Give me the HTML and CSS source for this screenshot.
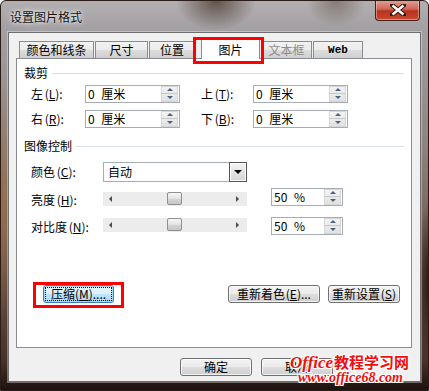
FILE: index.html
```html
<!DOCTYPE html>
<html lang="zh-CN">
  <head>
    <meta charset="UTF-8" />
    <title>设置图片格式</title>
    <link rel="stylesheet" href="styles.css">
  </head>
  <body>
    <div class="window">
      <div class="titlebar">
        <span class="title">设置图片格式</span>
        <span class="close-btn">
          <svg width="16" height="12" viewBox="0 0 16 12">
            <path d="M2 1 L14 11 M14 1 L2 11" stroke="#3a1510" stroke-width="4.4" stroke-linecap="square" />
            <path d="M2.5 1.5 L13.5 10.5 M13.5 1.5 L2.5 10.5" stroke="#fff" stroke-width="2.4" />
          </svg>
        </span>
      </div>

      <div class="client">
        <div class="tabs">
          <div class="tab t1">颜色和线条</div>
          <div class="tab t2">尺寸</div>
          <div class="tab t3">位置</div>
          <div class="tab active t4">图片</div>
          <div class="tab disabled t5">文本框</div>
          <div class="tab web t6">Web</div>
        </div>

        <div class="panel">
          <div class="group-title">
            <span>裁剪</span><i class="rule"></i>
          </div>
          <div class="crop-grid">
            <label>左 (<u>L</u>):</label>
            <div class="spin"><span class="val">0 厘米</span><span class="spin-btns"><b class="up"></b><b class="down"></b></span></div>
            <span></span>
            <label>上 (<u>T</u>):</label>
            <div class="spin"><span class="val">0 厘米</span><span class="spin-btns"><b class="up"></b><b class="down"></b></span></div>

            <label>右 (<u>R</u>):</label>
            <div class="spin"><span class="val">0 厘米</span><span class="spin-btns"><b class="up"></b><b class="down"></b></span></div>
            <span></span>
            <label>下 (<u>B</u>):</label>
            <div class="spin"><span class="val">0 厘米</span><span class="spin-btns"><b class="up"></b><b class="down"></b></span></div>
          </div>

          <div class="group-title g2">
            <span>图像控制</span><i class="rule"></i>
          </div>
          <div class="ctrl-row color-row">
            <label>颜色 (<u>C</u>):</label>
            <div class="select"><span class="val">自动</span><span class="drop"><b></b></span></div>
          </div>
          <div class="ctrl-row bright-row">
            <label>亮度 (<u>H</u>):</label>
            <div class="slider"><i class="arr-l"></i><i class="thumb" style="left: 64px"></i><i class="arr-r"></i></div>
            <div class="spin pct"><span class="val">50 %</span><span class="spin-btns"><b class="up"></b><b class="down"></b></span></div>
          </div>
          <div class="ctrl-row contrast-row">
            <label>对比度 (<u>N</u>):</label>
            <div class="slider"><i class="arr-l"></i><i class="thumb" style="left: 64px"></i><i class="arr-r"></i></div>
            <div class="spin pct"><span class="val">50 %</span><span class="spin-btns"><b class="up"></b><b class="down"></b></span></div>
          </div>

          <div class="btn-row">
            <button class="btn focused"><span>压缩(<u>M</u>)....</span></button>
            <div class="right-btns">
              <button class="btn recolor">重新着色 (<u>E</u>)...</button>
              <button class="btn reset">重新设置 (<u>S</u>)</button>
            </div>
          </div>
        </div>

        <div class="footer">
          <button class="btn">确定</button>
          <button class="btn">取消</button>
        </div>
      </div>

      <!-- 标注框 -->
      <div class="mark mark-tab"></div>
      <div class="mark mark-btn"></div>

      <!-- 水印 -->
      <div class="watermark">
        <div class="wm-top"><span class="wm-en">Office</span>教程学习网</div>
        <div class="wm-url">www.office68.com</div>
      </div>
    </div>
  </body>
</html>
```

FILE: styles.css
```css
body {
  margin: 0;
  font-family: "Noto Sans CJK SC", "Liberation Sans", sans-serif;
  font-size: 12px;
  color: #000;
}
u {
  text-decoration: underline;
}

.window {
  position: relative;
  width: 429px;
  height: 391px;
  box-sizing: border-box;
  padding: 0 7px 8px 7px;
  display: flex;
  flex-direction: column;
  overflow: hidden;
  background:
    radial-gradient(ellipse 40px 30px at 215px 0, rgba(70, 50, 40, 0.75), transparent),
    radial-gradient(ellipse 30px 26px at 335px 0, rgba(90, 70, 60, 0.5), transparent),
    radial-gradient(ellipse 14px 120px at 0 200px, rgba(160, 110, 70, 0.8), transparent),
    radial-gradient(ellipse 14px 80px at 429px 280px, rgba(30, 15, 10, 0.9), transparent),
    linear-gradient(to bottom, #b3afb1 0, #a3a0a3 28px, #8f8582 140px, #6f5548 260px, #4a3128 360px, #1a100c 391px);
  border: 1px solid #2a1c16;
  border-radius: 6px 6px 0 0;
}

/* 标题栏 */
.titlebar {
  height: 31px;
  display: flex;
  align-items: center;
  padding-left: 2px;
}
.title {
  font-size: 12px;
  color: #111;
  text-shadow: 0 0 6px #fff, 0 0 3px rgba(255, 255, 255, 0.8);
  margin-top: -1px;
}
.close-btn {
  margin-left: auto;
  margin-right: 1px;
  align-self: flex-start;
  width: 45px;
  height: 21px;
  box-sizing: border-box;
  margin-top: -1px;
  border: 1px solid #4a1e18;
  border-top: none;
  border-radius: 0 0 4px 4px;
  background: linear-gradient(to bottom, #e3a497 0, #d0685a 45%, #b8321f 55%, #c84a30 100%);
  box-shadow: inset 0 0 0 1px rgba(255, 220, 210, 0.45);
  display: flex;
  align-items: center;
  justify-content: center;
}

/* 客户区 */
.client {
  flex: 1;
  background-color: #f0f0f0;
  border: 1px solid #6e6e6e;
  box-shadow: 0 0 0 1px rgba(255, 255, 255, 0.35);
  display: flex;
  flex-direction: column;
}

/* 选项卡 */
.tabs {
  display: flex;
  align-items: flex-end;
  height: 20px;
  margin-top: 5px;
  padding-left: 10px;
}
.tab {
  height: 17px;
  box-sizing: border-box;
  border: 1px solid #898c95;
  border-bottom: none;
  background: linear-gradient(to bottom, #f2f2f2 0, #ebebeb 50%, #dddddd 51%, #cfcfcf 100%);
  display: flex;
  align-items: center;
  justify-content: center;
  line-height: 14px;
  margin-left: 1px;
}
.t1 { width: 75px; margin-left: 0; }
.t2 { width: 53px; }
.t3 { width: 46px; }
.t4 { width: 59px; margin-left: 6px; }
.t5 { width: 51px; }
.t6 { width: 50px; }
.tab.active {
  height: 21px;
  margin-bottom: -1px;
  background: #fff;
  position: relative;
  z-index: 1;
  padding-top: 1px;
}
.tab.disabled {
  color: #8d8d8d;
}
.tab.web {
  font-family: "Liberation Mono", monospace;
  font-size: 11px;
  font-weight: bold;
}

/* 面板 */
.panel {
  margin: 0 8px 0 7px;
  height: 290px;
  box-sizing: border-box;
  border: 1px solid #898c95;
  background: #fff;
  display: flex;
  flex-direction: column;
}
.group-title {
  display: flex;
  align-items: center;
  padding: 7px 7px 0 7px;
  line-height: 14px;
}
.group-title .rule {
  flex: 1;
  height: 1px;
  background: #d5dfe5;
  margin-left: 4px;
  margin-top: 1px;
}
.group-title.g2 {
  padding-top: 11px;
}

label {
  line-height: 14px;
  white-space: nowrap;
  word-spacing: -1px;
}

.crop-grid {
  display: grid;
  grid-template-columns: 54px 95px 21px 52px 95px;
  grid-auto-rows: 18px;
  row-gap: 7px;
  margin-top: 5px;
  padding-left: 14px;
  align-items: center;
}

/* 数值框 */
.spin {
  height: 18px;
  box-sizing: border-box;
  border: 1px solid #a5acb5;
  background: #fff;
  display: flex;
  align-items: center;
  padding: 1px 1px 1px 2px;
}
.spin .val {
  flex: 1;
  line-height: 14px;
  word-spacing: 4px;
}
.spin-btns {
  width: 15px;
  height: 14px;
  display: flex;
  flex-direction: column;
  background: linear-gradient(to bottom, #f3f3f3, #e1e1e1);
  border: 1px solid #d6d6d6;
  box-sizing: content-box;
  margin-top: -1px;
}
.spin-btns b {
  flex: 1;
  display: flex;
  align-items: center;
  justify-content: center;
}
.spin-btns b.up {
  border-bottom: 1px solid #c8c8c8;
}
.spin-btns b::before {
  content: "";
  width: 0;
  height: 0;
  border-left: 3px solid transparent;
  border-right: 3px solid transparent;
}
.spin-btns b.up::before {
  border-bottom: 3px solid #4d6185;
}
.spin-btns b.down::before {
  border-top: 3px solid #4d6185;
}

/* 控制行 */
.ctrl-row {
  display: flex;
  align-items: flex-start;
  padding-left: 14px;
}
.ctrl-row label {
  width: 72px;
}
.color-row {
  margin-top: 9px;
  height: 20px;
  align-items: center;
}
.select {
  width: 144px;
  height: 20px;
  box-sizing: border-box;
  border: 1px solid #a5acb5;
  display: flex;
  align-items: center;
  padding-left: 4px;
}
.select .val {
  flex: 1;
  line-height: 14px;
}
.select .drop {
  width: 18px;
  height: 20px;
  box-sizing: border-box;
  margin-right: -1px;
  border: 1px solid #555;
  background: linear-gradient(to bottom, #f4f4f4, #d4d4d4);
  box-shadow: inset 0 0 0 1px #fff;
  display: flex;
  align-items: center;
  justify-content: center;
}
.select .drop b {
  width: 0;
  height: 0;
  border-left: 4px solid transparent;
  border-right: 4px solid transparent;
  border-top: 4px solid #000;
}

.bright-row {
  margin-top: 6px;
  height: 18px;
}
.bright-row label {
  margin-top: 5px;
}
.bright-row .slider {
  margin-top: 4px;
}
.contrast-row {
  margin-top: 11px;
  height: 18px;
}
.contrast-row label {
  margin-top: 3px;
}
.contrast-row .slider {
  margin-top: 1px;
}
.slider {
  position: relative;
  width: 144px;
  height: 14px;
  background: #ececec;
  display: flex;
  align-items: center;
  justify-content: space-between;
  padding: 0 8px 0 6px;
  box-sizing: border-box;
}
.arr-l {
  width: 0;
  height: 0;
  border-top: 3px solid transparent;
  border-bottom: 3px solid transparent;
  border-right: 3px solid #4a4a4a;
}
.arr-r {
  width: 0;
  height: 0;
  border-top: 3px solid transparent;
  border-bottom: 3px solid transparent;
  border-left: 3px solid #4a4a4a;
}
.thumb {
  position: absolute;
  top: 0;
  width: 15px;
  height: 13px;
  box-sizing: border-box;
  border: 1px solid #8e8f8f;
  border-radius: 2px;
  background: linear-gradient(to bottom, #f6f6f6 0, #e4e4e4 50%, #d3d3d3 51%, #c9c9c9 100%);
}
.spin.pct {
  width: 72px;
  margin-left: 24px;
}

/* 按钮 */
.btn {
  font-family: "Noto Sans CJK SC", "Liberation Sans", sans-serif;
  font-size: 12px;
  line-height: 14px;
  height: 18px;
  padding: 0;
  color: #000;
  border: 1px solid #707070;
  border-radius: 3px;
  background: linear-gradient(to bottom, #f2f2f2 0, #ebebeb 50%, #dddddd 51%, #cfcfcf 100%);
  box-shadow: inset 0 0 0 1px rgba(255, 255, 255, 0.7);
  white-space: nowrap;
  word-spacing: -2px;
}
.btn-row {
  display: flex;
  margin-top: 50px;
  padding: 0 11px 0 26px;
}
.btn.focused {
  width: 71px;
  border-color: #3c7fb1;
  background: linear-gradient(to bottom, #eaf6fd 0, #d9f0fc 50%, #bee6fd 51%, #a7d9f5 100%);
  box-shadow: inset 0 0 0 1px #97e0f8;
  padding: 1px;
}
.btn.focused span {
  display: block;
  border: 1px dotted #000;
  height: 12px;
  line-height: 12px;
  padding: 0 1px;
}
.right-btns {
  margin-left: auto;
  display: flex;
  gap: 8px;
}
.recolor { width: 92px; }
.reset { width: 72px; }

.footer {
  display: flex;
  gap: 9px;
  margin-top: 10px;
  padding-left: 171px;
}
.footer .btn {
  width: 72px;
}

/* 红色标注框 */
.mark {
  position: absolute;
  border: 3px solid #f00;
  box-sizing: border-box;
  z-index: 5;
}
.mark-tab {
  left: 192px;
  top: 36px;
  width: 71px;
  height: 27px;
}
.mark-btn {
  left: 32px;
  top: 281px;
  width: 91px;
  height: 26px;
}

/* 水印 */
.watermark {
  position: absolute;
  left: 289px;
  top: 353px;
  z-index: 6;
  color: #ee1010;
  font-weight: bold;
  text-shadow: 1px 0 0 #fff, -1px 0 0 #fff, 0 1px 0 #fff, 0 -1px 0 #fff, 1px 1px 0 #fff, -1px -1px 0 #fff, 1px -1px 0 #fff, -1px 1px 0 #fff;
}
.wm-top {
  font-size: 15px;
  line-height: 16px;
  height: 16px;
  white-space: nowrap;
}
.wm-en {
  font-family: "Liberation Serif", serif;
  font-style: italic;
  font-size: 17px;
  line-height: 16px;
  margin-right: 1px;
}
.wm-url {
  font-family: "Liberation Serif", serif;
  font-style: italic;
  font-size: 14px;
  line-height: 14px;
  margin-top: 1px;
  margin-left: 8px;
  white-space: nowrap;
}
```
